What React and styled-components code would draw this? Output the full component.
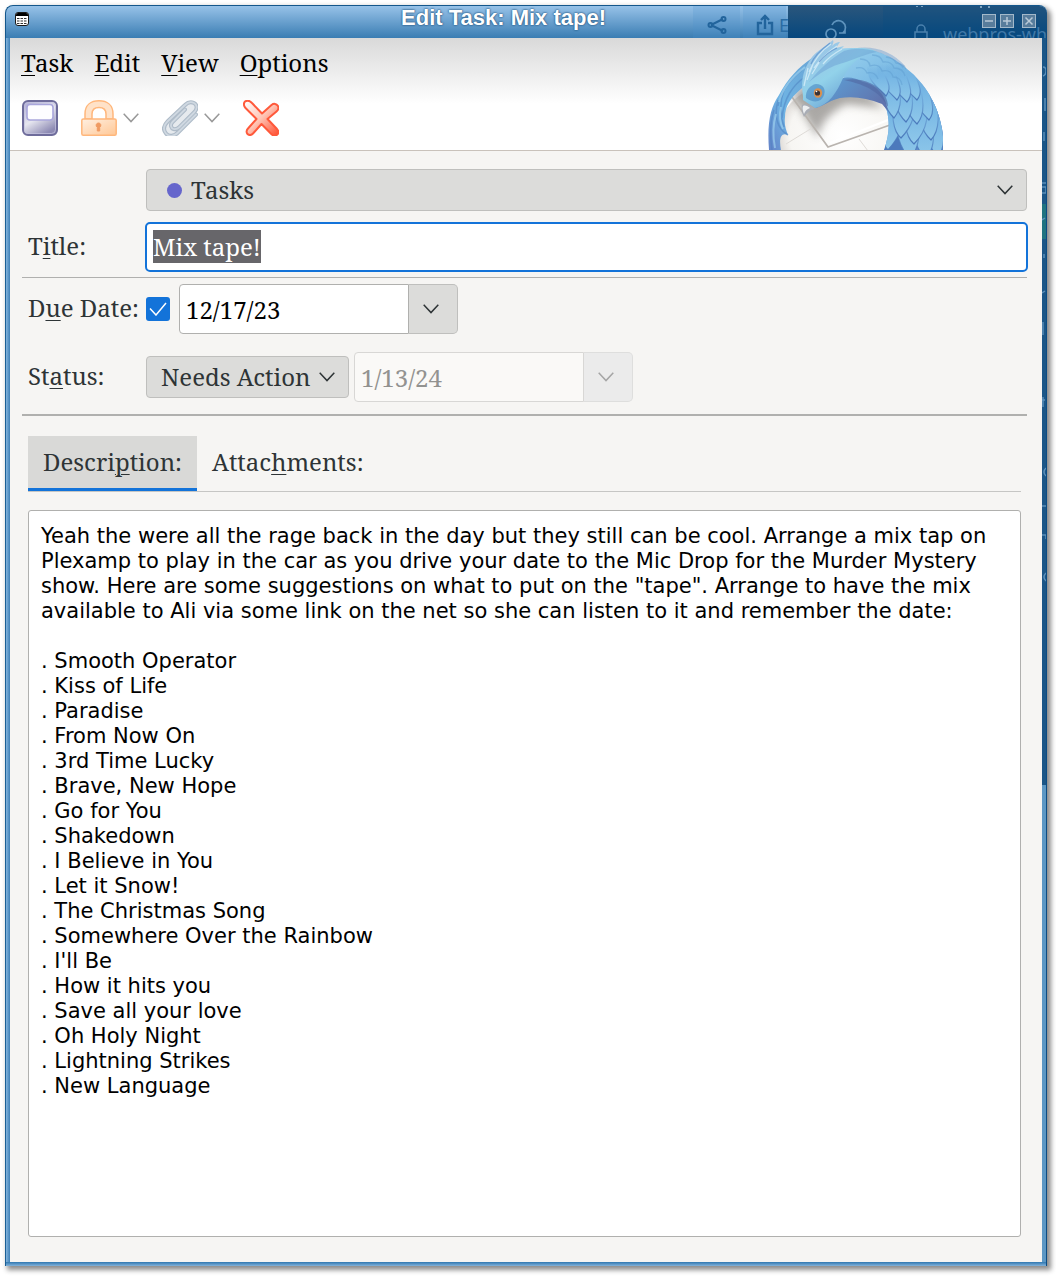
import React, { useEffect, useRef } from "react";
import styled, { createGlobalStyle, css } from "styled-components";

const serif = '"Noto Serif", "DejaVu Serif Condensed", "DejaVu Serif", serif';

const GlobalStyle = createGlobalStyle`
  *, *::before, *::after { box-sizing: border-box; }
  body {
    margin: 0;
    background: #fff;
    color: #2e3436;
    font-family: ${serif};
    font-size: 24px;
    line-height: 34px;
  }
  button, input, select, textarea { font: inherit; color: inherit; margin: 0; }
  u {
    text-decoration-thickness: 1px;
    text-underline-offset: 3px;
  }
`;

const Desktop = styled.div`
  padding: 5px 9px 10px 5px;
`;

const Window = styled.section`
  display: grid;
  grid-template-columns: 5px minmax(0, 1fr) 5px;
  grid-template-rows: 33px auto 4px;
  border-radius: 8px 8px 0 0;
  box-shadow: 3px 3px 5px 1px rgba(0, 0, 0, 0.45);
`;

const TitleBar = styled.header`
  grid-column: 1 / -1;
  position: relative;
  display: flex;
  align-items: flex-start;
  border-top: 1px solid #14578c;
  border-left: 1px solid #14578c;
  border-radius: 8px 8px 0 0;
  background: linear-gradient(#97c2e8, #3a7db3);
  overflow: hidden;
`;

const TitleGhost = styled.svg`
  position: absolute;
  top: 0;
  right: 0;
  width: 354px;
  height: 32px;
`;

const WindowIcon = styled.svg`
  position: relative;
  flex: none;
  width: 14px;
  height: 14px;
  margin: 6px 0 0 9px;
`;

const WindowTitle = styled.h1`
  position: relative;
  flex: 1;
  margin: 0;
  color: #fff;
  font: 700 22px/24px "Liberation Sans", Arial, sans-serif;
  text-align: center;
  text-shadow: 0 0 2px #1d4f7c, 0 0 2px #35658f;
`;

const WindowButtons = styled.div`
  position: relative;
  display: flex;
  gap: 4px;
  margin: 8px 11px 0 4px;
`;

const WindowButton = styled.button`
  width: 14px;
  height: 14px;
  padding: 0;
  border: 1px solid #a3b9ca;
  background: #587d9c;
  color: #b9cad8;
  line-height: 0;

  &:last-child { margin-left: 4px; }
`;

const FrameLeft = styled.div`
  border-left: 1px solid #1b5f95;
  background: linear-gradient(90deg, #83b4dd, #3f80b6);
`;

const FrameRight = styled.div`
  position: relative;
  overflow: hidden;
  border-right: 1px solid #0b4c84;
  background: linear-gradient(#1b5687 0 747px, #5c97c4 747px);
`;

const FrameGhost = styled.svg`
  position: absolute;
  top: 0;
  left: 0;
  width: 4px;
  height: 560px;
`;

const FrameBottom = styled.div`
  grid-column: 1 / -1;
  background: linear-gradient(#2f77b0, #84b3da);
  border-left: 1px solid #1b5f95;
  border-right: 1px solid #0b4c84;
`;

const Content = styled.main`
  background: #f6f5f3;
`;

const Toolbox = styled.div`
  display: flex;
  justify-content: space-between;
  align-items: flex-end;
  height: 113px;
  padding-right: 99px;
  border-bottom: 1px solid #c9c2bb;
  background: linear-gradient(#d9d9d9, #fff 66px);
`;

const Bars = styled.div`
  align-self: stretch;
  padding: 8px 0 0 11px;
`;

const MenuBar = styled.nav`
  display: flex;
  gap: 21px;
`;

const MenuButton = styled.button`
  padding: 0;
  border: 0;
  background: none;
  color: #000;
`;

const ToolBar = styled.div`
  display: flex;
  align-items: center;
  gap: 23px;
  padding: 20px 0 0 1px;
`;

const ToolButton = styled.button`
  display: flex;
  align-items: center;
  gap: 6px;
  padding: 0;
  border: 0;
  background: none;
`;

const ToolIcon = styled.svg`
  width: 36px;
  height: 36px;
`;

const Bird = styled.svg`
  flex: none;
  width: 175px;
  height: 112px;
`;

const Form = styled.form`
  padding: 18px 15px 25px 12px;
`;

const Row = styled.div`
  display: grid;
  grid-template-columns: 118px minmax(0, 1fr);
  align-items: center;
  padding-left: 6px;
  margin-bottom: ${(p) => p.$gap}px;
`;

const Label = styled.label`
  padding-bottom: 2px;
`;

const Group = styled.div`
  display: flex;
  align-items: center;
`;

const Rule = styled.hr`
  height: ${(p) => p.$weight}px;
  margin: 0 0 ${(p) => p.$gap}px;
  border: 0;
  background: #b0b0ae;
`;

const SelectBox = styled.div`
  display: grid;
  align-items: center;
  width: ${(p) => p.$width || "auto"};
  margin-right: ${(p) => (p.$width ? 5 : 0)}px;
  grid-column: 2;

  > * { grid-area: 1 / 1; }
  > svg { justify-self: end; margin-right: 14px; pointer-events: none; }
`;

const Select = styled.select`
  appearance: none;
  width: 100%;
  height: 42px;
  padding: 0 0 0 ${(p) => p.$indent}px;
  border: 1px solid #bfbfbd;
  border-radius: 4px;
  background: #dcdcda;
  line-height: 34px;
`;

const CalendarDot = styled.span`
  width: 15px;
  height: 15px;
  margin-left: 21px;
  border-radius: 50%;
  background: #6666cc;
  pointer-events: none;
`;

const TitleInput = styled.input`
  height: 50px;
  padding: 0 6px 2px;
  margin: 0 -1px;
  border: 2px solid #1373d9;
  border-radius: 5px;
  outline: 0;
  background: #fff;

  &::selection { background: rgba(101, 100, 104, 0.99); color: #fff; }
`;

const CheckBox = styled.span`
  display: grid;
  place-items: center;
  width: 24px;
  height: 24px;
  margin-right: 9px;

  > * { grid-area: 1 / 1; }
  > svg { pointer-events: none; }
`;

const CheckInput = styled.input`
  appearance: none;
  width: 24px;
  height: 24px;
  border-radius: 3px;
  background: #1373d9;
`;

const DateBox = styled.span`
  display: flex;
  align-items: flex-start;
`;

const DateInput = styled.input`
  width: 230px;
  height: 50px;
  padding: 0 6px;
  border: 1px solid #b0b0ae;
  border-radius: 4px 0 0 4px;
  background: #fff;
  color: #000;

  &:disabled {
    border-color: #d8d7d5;
    background: #faf9f7;
    color: #929290;
  }
`;

const DateButton = styled.button`
  display: flex;
  align-items: center;
  width: 49px;
  height: 50px;
  padding: 0 14px;
  border: 1px solid #bfbfbd;
  border-left: 0;
  border-radius: 0 5px 5px 0;
  background: #dcdcda;

  &:disabled {
    border-color: #dededd;
    background: #ebebeb;
    color: #a5a5a5;
  }
`;

const Tabs = styled.div`
  display: flex;
  margin: 0 6px 18px;
  border-bottom: 1px solid #c6c6c4;
`;

const Tab = styled.button`
  height: 55px;
  padding: 0 15px;
  border: 0;
  border-bottom: 3px solid transparent;
  background: none;
  ${(p) =>
    p.$active &&
    css`
      border-bottom-color: #1373d9;
      background: #d9d9d7;
    `}
`;

const Panel = styled.div`
  display: flex;
  padding: 0 6px;
`;

const Description = styled.textarea`
  flex: 1;
  min-width: 0;
  padding: 13px 12px 12px;
  border: 1px solid #b0b0ae;
  border-radius: 3px;
  outline: 0;
  resize: none;
  overflow: hidden;
  background: #fff;
  color: #000;
  font: 21px/25px "DejaVu Sans", sans-serif;
`;

const Chevron = ({ color = "#2e3436" }) => (
  <svg width="16" height="10" viewBox="0 0 16 10" fill="none" stroke={color} strokeWidth="1.5" aria-hidden="true">
    <path d="M.7.8 8 8.6 15.3.8" />
  </svg>
);

function TitleDecor() {
  return (
    <TitleGhost viewBox="0 0 354 32" aria-hidden="true">
      <defs>
        <linearGradient id="dark" x1="0" x2="0" y1="0" y2="1">
          <stop offset="0" stopColor="#2a567c" />
          <stop offset="1" stopColor="#05477e" />
        </linearGradient>
      </defs>
      <path d="M0 0h47v32H0zM50 0h43v32H50z" fill="#4f93cc" opacity=".22" />
      <g fill="none" stroke="#22649c" strokeWidth="2">
        <path d="m18 19 12-6M18 19l12 6" />
        <circle cx="17.500" cy="19" r="2" />
        <circle cx="30.500" cy="13" r="2" />
        <circle cx="30.500" cy="25" r="2" />
        <path d="M69 17h-4v11h14V17h-4M72 23V10M68 14l4-4 4 4" strokeWidth="2.400" />
      </g>
      <text x="86" y="26" fill="#2a6ca4" fontFamily="Noto Sans, sans-serif" fontSize="18">E</text>
      <path d="M95 0h259v32H95z" fill="url(#dark)" />
      <path d="M190 0h164v32H190z" fill="#034b85" opacity=".25" />
      <g fill="none" stroke="#5e93bd" strokeWidth="1.700">
        <circle cx="138" cy="28" r="5" />
        <path d="M139 19a7 7 0 1 1 11 8h2v-3M150 27h-4" />
      </g>
      <g fill="none" stroke="#4a80ad" strokeWidth="1.500">
        <path d="M222 34v-8h12v8M224 26v-3a4 4 0 0 1 8 0v3" />
      </g>
      <path d="M224 0v1M229 0v1M288 0v2M296 0v2" stroke="#7da3c0" strokeWidth="2" />
      <text x="250" y="35" fill="#4179a8" fontFamily="Noto Sans, sans-serif" fontSize="18">webpros-wh</text>
    </TitleGhost>
  );
}

function FrameDecor() {
  return (
    <FrameGhost viewBox="0 0 4 560" aria-hidden="true">
      <path d="M0 166h4v35H0z" fill="#1f7380" />
      <path
        d="M1 29q3 0 3 4t-3 5M3 60v13M2 94v9M0 145h4M0 149h4v6H0M0 182l3-2M2 216v4M0 255l3-2M1 284v13M1 359v10M0 362h3M4 430q-4 4 0 8M0 468h4M0 497h4v4M4 535q-4 4 0 8"
        fill="none"
        stroke="#5b8fb9"
        strokeWidth="1.500"
      />
    </FrameGhost>
  );
}

function SaveIcon() {
  return (
    <ToolIcon viewBox="0 0 36 36" aria-hidden="true">
      <defs>
        <linearGradient id="disk" x1="0" y1="0" x2=".6" y2="1">
          <stop offset="0" stopColor="#aaa8d0" />
          <stop offset=".55" stopColor="#e6e6ef" />
          <stop offset="1" stopColor="#8e8bb4" />
        </linearGradient>
      </defs>
      <rect x="1" y="1" width="34" height="34" rx="5" fill="url(#disk)" stroke="#6e6c9b" strokeWidth="2" />
      <rect x="2.500" y="2.500" width="31" height="31" rx="4" fill="none" stroke="#c4c3df" opacity=".7" />
      <rect x="5" y="4.500" width="26" height="15.500" rx="3" fill="#fdfdff" stroke="#a9a6dc" strokeWidth="1.600" />
    </ToolIcon>
  );
}

function LockIcon() {
  return (
    <ToolIcon viewBox="0 0 36 36" aria-hidden="true">
      <defs>
        <linearGradient id="lock" x1="0" y1="0" x2="1" y2="1">
          <stop offset="0" stopColor="#fff0e2" />
          <stop offset="1" stopColor="#ffc795" />
        </linearGradient>
      </defs>
      <path
        d="M4 19v-5C4 5 10 .8 18 .8S32 5 32 14v5h-7v-5c0-4-2.500-6.500-7-6.500S11 10 11 14v5z"
        fill="#ffe2c8"
        stroke="#ffb77c"
        strokeWidth="1.500"
      />
      <rect x=".8" y="19" width="34.400" height="16.200" rx="1.500" fill="url(#lock)" stroke="#ffb77c" strokeWidth="1.500" />
      <path d="M17.500 23a2.300 2.300 0 0 1 1.200 4.300V31h-2.400v-3.700A2.300 2.300 0 0 1 17.500 23z" fill="#f09a62" stroke="#f09a62" />
    </ToolIcon>
  );
}

function ClipIcon() {
  const wire = "M22 9 9.500 21.500c-3 3-1 6.500 1 7s4 0 6-2L31 12c4-4 3-8 0-9.500s-6-1-9 2L5 20.500c-5 5-5 9-2 12.500s8 3 12-1L33 14";
  return (
    <ToolIcon viewBox="0 0 36 36" fill="none" strokeLinecap="round" aria-hidden="true">
      <g transform="translate(1 .5)">
        <path d="M5 20.500 22 4.500c3-3 6-3.500 9-2s4 5.500 0 9.500L16 31c-4 4-10 5-13 2s-3-7.500 2-12.500z" fill="#e6eaee" />
        <path d={wire} stroke="#aebbc8" strokeWidth="4" />
        <path d={wire} stroke="#cfd8e1" strokeWidth="1.800" />
      </g>
    </ToolIcon>
  );
}

function DeleteIcon() {
  return (
    <ToolIcon viewBox="0 0 36 36" aria-hidden="true">
      <defs>
        <linearGradient id="cross" x1="0" y1="0" x2="1" y2="1">
          <stop offset="0" stopColor="#fff" />
          <stop offset=".5" stopColor="#ffc4b4" />
          <stop offset="1" stopColor="#ff4a2c" />
        </linearGradient>
      </defs>
      <path
        d="M2 1.500C5-.2 7 .8 9 3l10 10.500L28.500 5c2.500-2 5-1.200 6.300.800s.7 4-1.300 5.700L24.500 19l9.500 10c2 2.500 1.500 4.500 0 5.800s-4 1-6-1L18.500 24 10 33.500c-2 2-4 2-5.500.500s-1-4 .500-5.500L13.500 19 2.500 8C.500 6 .5 3 2 1.500z"
        fill="url(#cross)"
        stroke="#ff593b"
        strokeWidth="2"
        strokeLinejoin="round"
      />
    </ToolIcon>
  );
}

/* root x, root y, tip x, tip y, width; listed from the back of the wing to the front */
const feathers = [
  [160, 62, 170, 116, 18],
  [150, 60, 158, 118, 20],
  [136, 60, 142, 118, 20],
  [124, 58, 120, 110, 18],
  [156, 48, 163, 100, 18],
  [146, 50, 146, 104, 20],
  [134, 50, 133, 98, 19],
  [148, 36, 161, 80, 16],
  [141, 36, 149, 84, 17],
  [131, 34, 138, 82, 17],
  [120, 34, 126, 78, 16],
  [136, 27, 149, 60, 15],
  [126, 24, 139, 62, 16],
  [116, 24, 129, 60, 15],
  [106, 26, 118, 56, 14],
];

const featherPath = ([x1, y1, x2, y2, w]) =>
  `M${x1 - w / 2} ${y1}C${x1 - w / 2} ${(y1 + y2) / 2} ${x2 - w / 2} ${y2 - 8} ${x2} ${y2}C${x2 + w / 2} ${y2 - 10} ${x1 + w * 0.9} ${(y1 + y2) / 2} ${x1 + w / 2} ${y1}z`;

function ThunderbirdArt() {
  return (
    <Bird viewBox="0 -2 175 112" aria-hidden="true">
      <defs>
        <linearGradient id="wing" x1="0" y1="0" x2=".7" y2="1">
          <stop offset="0" stopColor="#9ad2ee" />
          <stop offset=".5" stopColor="#74b4e2" />
          <stop offset="1" stopColor="#5a8ccc" />
        </linearGradient>
        <linearGradient id="feather" x1="0" y1="0" x2="0" y2="1">
          <stop offset="0" stopColor="#72b1e0" stopOpacity="0" />
          <stop offset=".35" stopColor="#76b6e4" />
          <stop offset="1" stopColor="#8fc8ea" />
        </linearGradient>
        <linearGradient id="vein" x1="0" y1="0" x2="0" y2="1">
          <stop offset=".3" stopColor="#4978bb" stopOpacity="0" />
          <stop offset="1" stopColor="#4978bb" />
        </linearGradient>
        <linearGradient id="head" x1=".1" y1="0" x2=".9" y2="1">
          <stop offset="0" stopColor="#9fbfe4" />
          <stop offset=".45" stopColor="#92d2ea" />
          <stop offset="1" stopColor="#5387c8" />
        </linearGradient>
        <linearGradient id="left" x1="1" y1="0" x2="0" y2="1">
          <stop offset="0" stopColor="#6aa6d6" />
          <stop offset=".6" stopColor="#6fb4e4" />
          <stop offset="1" stopColor="#6483c8" />
        </linearGradient>
        <linearGradient id="throat" x1="0" y1="0" x2="1" y2=".5">
          <stop offset="0" stopColor="#5da4da" />
          <stop offset="1" stopColor="#6074ae" />
        </linearGradient>
        <radialGradient id="paper" cx=".55" cy=".5" r=".6">
          <stop offset="0" stopColor="#fff" />
          <stop offset=".75" stopColor="#f7f6f3" />
          <stop offset="1" stopColor="#d2cdc9" />
        </radialGradient>
        <filter id="soft" x="-20%" y="-20%" width="140%" height="150%">
          <feGaussianBlur stdDeviation="4" />
        </filter>
        <clipPath id="wingShape">
          <path d="M70 9C96 5 121 12 139 29c18 14 31 36 35 60q2 12 1 21h-59c5-14 6-26 3-39-5-12-15-20-42-24z" />
        </clipPath>
      </defs>

      <ellipse cx="68" cy="95" rx="58" ry="51" fill="url(#paper)" />
      <path d="M24 55 38 78 50 98C52 82 64 72 78 64L116 68 100 54 40 42z" fill="#77736f" opacity=".6" filter="url(#soft)" />
      <path d="M24 57 60 107 122 85" fill="none" stroke="#b9b4af" strokeWidth="1.800" />
      <path d="M62 103 120 80" fill="none" stroke="#fff" strokeWidth="2" />
      <path d="M18 104 44 88M91 99l9 12" fill="none" stroke="#dedbd7" />

      <path d="M1 110C-1 84 2 68 11 55 20 38 30 28 44 18L42 40 33 49C22 58 17 67 17 77 16 85 18 90 20 95 12 92 11 100 13 110z" fill="url(#left)" />
      <path d="M6 70C2 82 2 96 4 110M10 60C6 76 8 88 20 95M34 30C20 42 12 54 10 66M38 36C24 46 16 58 14 78M16 50c-5 14-4 26 0 37" fill="none" stroke="#4c7fc0" strokeWidth="1.500" opacity=".5" />
      <path d="M37 27C24 37 14 50 11 62M8 74c-3 10-3 24-1 34M13 67c-2 9-1 16 2 22" fill="none" stroke="#9fd4f0" strokeWidth="2" opacity=".65" />

      <path
        d="M70 9C96 5 121 12 139 29c18 14 31 36 35 60q2 12 1 21h-59c5-14 6-26 3-39-5-12-15-20-42-24z"
        fill="url(#wing)"
      />
      <g clipPath="url(#wingShape)">
        <path d="M119 70c5 12 4 28-4 42h24V70z" fill="#4c79bc" />
        <path d="M155 60h25v55h-34z" fill="#5e8acb" />
        {feathers.map((f) => (
          <path key={f.join()} d={featherPath(f)} fill="url(#feather)" stroke="url(#vein)" strokeWidth="1.200" />
        ))}
      </g>
      <path
        d="M92 19q9 0 10 7 9-3 12 5 9-2 11 6 8 0 9 8M104 15q9 0 11 7 9-1 11 6 9 0 11 8M88 28q8-2 11 5 8-2 11 6M118 17q8 1 10 6 8 1 10 6"
        fill="none"
        stroke="#5e9bcf"
        strokeWidth="1.300"
        opacity=".45"
      />
      <path d="M86 10c18-3 36 2 50 17" fill="none" stroke="#5f95d0" strokeWidth="3" opacity=".4" />

      <path d="M58 50C70 34 84 36 95 42c13 3 22 11 25 29l-6-7c-15-6-28-8-42-6-14 4-18 9-25 10z" fill="url(#throat)" />
      <path d="M76 40c16-3 32 3 40 14 3 5 4 9 4 13-8-14-20-22-44-27z" fill="#516aa5" opacity=".65" />
      <path
        d="M35 56C32 37 37 27 44 17 50 10 58 6 65 0c1 2 0 4-1 6 3-3 5-4 8-4l-4 6 8-2-5 5c16-4 30-4 38 1-16 1-27 12-34 26-6 14-14 27-28 30l-12-8z"
        fill="url(#head)"
      />
      <path d="M76 11c-12 7-24 17-35 31 11-9 21-16 37-20 12-4 20-8 31-10-12-4-22-4-33-1z" fill="#6fa4d6" opacity=".55" />
      <path d="M63 4C54 10 47 18 41 32M69 6C60 12 53 18 46 28M74 9C65 14 60 18 55 24M40 28l-4 18M45 24l-6 16M52 21l-8 13" fill="none" stroke="#d2ecf8" strokeWidth="1.300" opacity=".85" />
      <path d="M62 3C54 9 46 16 43 24M69 8c-7 3-13 8-18 14" fill="none" stroke="#5b8fcb" strokeWidth="1.200" opacity=".7" />
      <path d="M38 58c-1-7 4-13 10-14 7 0 10 5 8 11-3 8-11 8-18 3z" fill="#417fbd" opacity=".55" />
      <ellipse cx="50" cy="53" rx="4.200" ry="4.800" fill="#d99150" />
      <circle cx="49.500" cy="53" r="2.600" fill="#3a3134" />
      <circle cx="48.500" cy="51.500" r=".8" fill="#fff" />
      <path d="M34 65c3-2 8 0 13 4-6 1-8 4-11 8-2-4-3-8-2-12z" fill="#a9adb5" />
      <path d="M35 66c2-1 5 0 7 2-3 1-5 3-6 6-1-3-2-5-1-8z" fill="#eceef0" />
    </Bird>
  );
}

const notes = `Yeah the were all the rage back in the day but they still can be cool. Arrange a mix tap on Plexamp to play in the car as you drive your date to the Mic Drop for the Murder Mystery show. Here are some suggestions on what to put on the "tape". Arrange to have the mix available to Ali via some link on the net so she can listen to it and remember the date:

. Smooth Operator
. Kiss of Life
. Paradise
. From Now On
. 3rd Time Lucky
. Brave, New Hope
. Go for You
. Shakedown
. I Believe in You
. Let it Snow!
. The Christmas Song
. Somewhere Over the Rainbow
. I'll Be
. How it hits you
. Save all your love
. Oh Holy Night
. Lightning Strikes
. New Language`;

export default function App() {
  const titleRef = useRef(null);

  useEffect(() => {
    titleRef.current.focus();
    titleRef.current.select();
  }, []);

  return (
    <Desktop>
      <GlobalStyle />
      <Window>
        <TitleBar>
          <TitleDecor />
          <WindowIcon viewBox="0 0 14 14" aria-hidden="true">
            <rect x=".5" y=".5" width="13" height="13" rx="2.500" fill="#fff" stroke="#1a1a1a" />
            <path d="M1 3q0-2 2-2h8q2 0 2 2v1H1z" fill="#000" />
            <path d="M2 6.500h10M2 9h10M2 11.500h10" stroke="#333" strokeDasharray="2.500 1" />
          </WindowIcon>
          <WindowTitle>Edit Task: Mix tape!</WindowTitle>
          <WindowButtons>
            <WindowButton type="button" aria-label="Minimize">
              <svg width="12" height="12" fill="none" stroke="currentColor" strokeWidth="1.5"><path d="M2 6h8" /></svg>
            </WindowButton>
            <WindowButton type="button" aria-label="Maximize">
              <svg width="12" height="12" fill="none" stroke="currentColor" strokeWidth="1.5"><path d="M2 6h8M6 2v8" /></svg>
            </WindowButton>
            <WindowButton type="button" aria-label="Close">
              <svg width="12" height="12" fill="none" stroke="currentColor" strokeWidth="1.5"><path d="m2.500 2.500 7 7M9.500 2.500l-7 7" /></svg>
            </WindowButton>
          </WindowButtons>
        </TitleBar>

        <FrameLeft />
        <Content>
          <Toolbox>
            <Bars>
              <MenuBar>
                <MenuButton type="button"><u>T</u>ask</MenuButton>
                <MenuButton type="button"><u>E</u>dit</MenuButton>
                <MenuButton type="button"><u>V</u>iew</MenuButton>
                <MenuButton type="button"><u>O</u>ptions</MenuButton>
              </MenuBar>
              <ToolBar>
                <ToolButton type="button" aria-label="Save and Close"><SaveIcon /></ToolButton>
                <ToolButton type="button" aria-label="Privacy"><LockIcon /><Chevron color="#999" /></ToolButton>
                <ToolButton type="button" aria-label="Attach"><ClipIcon /><Chevron color="#999" /></ToolButton>
                <ToolButton type="button" aria-label="Delete"><DeleteIcon /></ToolButton>
              </ToolBar>
            </Bars>
            <ThunderbirdArt />
          </Toolbox>

          <Form onSubmit={(e) => e.preventDefault()}>
            <Row $gap={11}>
              <SelectBox>
                <Select $indent={44} aria-label="Calendar">
                  <option>Tasks</option>
                </Select>
                <CalendarDot />
                <Chevron />
              </SelectBox>
            </Row>
            <Row $gap={5}>
              <Label htmlFor="title">T<u>i</u>tle:</Label>
              <TitleInput id="title" ref={titleRef} defaultValue="Mix tape!" />
            </Row>
            <Rule $weight={1} $gap={6} />
            <Row $gap={18}>
              <Label htmlFor="due">D<u>u</u>e Date:</Label>
              <Group>
                <CheckBox>
                  <CheckInput id="due" type="checkbox" defaultChecked />
                  <svg width="18" height="14" viewBox="0 0 18 14" fill="none" stroke="#fff" strokeWidth="1.500" aria-hidden="true">
                    <path d="M1 6.500 7 13 17 1" />
                  </svg>
                </CheckBox>
                <DateBox>
                  <DateInput aria-label="Due date" defaultValue="12/17/23" />
                  <DateButton type="button" aria-label="Choose due date"><Chevron /></DateButton>
                </DateBox>
              </Group>
            </Row>
            <Row $gap={12}>
              <Label htmlFor="status">St<u>a</u>tus:</Label>
              <Group>
                <SelectBox $width="203px">
                  <Select id="status" $indent={14}>
                    <option>Needs Action</option>
                  </Select>
                  <Chevron />
                </SelectBox>
                <DateBox>
                  <DateInput aria-label="Completed date" defaultValue="1/13/24" disabled />
                  <DateButton type="button" aria-label="Choose completed date" disabled><Chevron color="#a5a5a5" /></DateButton>
                </DateBox>
              </Group>
            </Row>
            <Rule $weight={2} $gap={20} />
            <Tabs role="tablist">
              <Tab type="button" role="tab" aria-selected="true" $active>Descri<u>p</u>tion:</Tab>
              <Tab type="button" role="tab" aria-selected="false">Attac<u>h</u>ments:</Tab>
            </Tabs>
            <Panel role="tabpanel">
              <Description aria-label="Description" rows={28} defaultValue={notes} spellCheck={false} />
            </Panel>
          </Form>
        </Content>
        <FrameRight><FrameDecor /></FrameRight>
        <FrameBottom />
      </Window>
    </Desktop>
  );
}
